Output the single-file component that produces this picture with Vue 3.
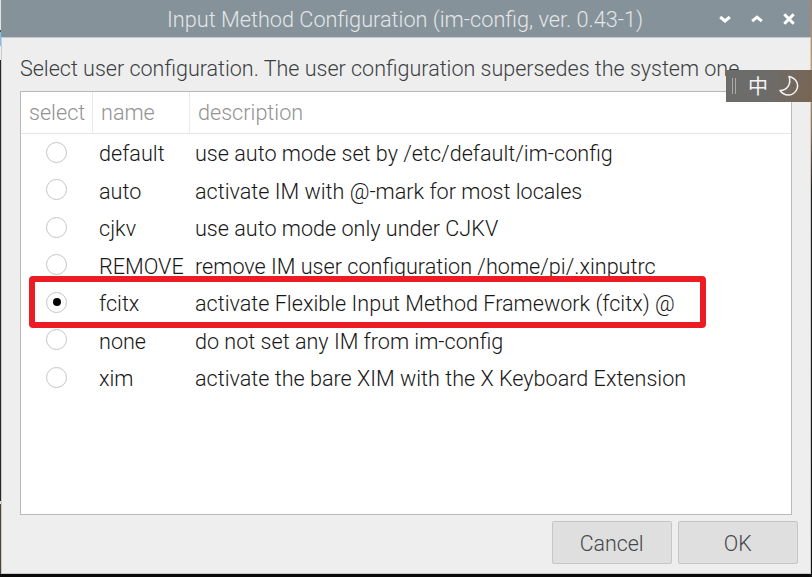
<script setup>
import { ref } from 'vue'

const selected = ref('fcitx')
const rows = [
  { name: 'default', description: 'use auto mode set by /etc/default/im-config' },
  { name: 'auto', description: 'activate IM with @-mark for most locales' },
  { name: 'cjkv', description: 'use auto mode only under CJKV' },
  { name: 'REMOVE', description: 'remove IM user configuration /home/pi/.xinputrc' },
  { name: 'fcitx', description: 'activate Flexible Input Method Framework (fcitx) @' },
  { name: 'none', description: 'do not set any IM from im-config' },
  { name: 'xim', description: 'activate the bare XIM with the X Keyboard Extension' },
]
</script>

<template>
  <div class="desktop">
    <section class="window">
      <header class="titlebar">
        <h1><span class="narrow">Input Method Configuration (im-config, ver. 0.43-1)</span></h1>
        <div class="controls">
          <svg viewBox="0 0 14 14"><path d="M2.2 5 7 9 11.8 5" /></svg>
          <svg viewBox="0 0 14 14"><path d="M2.2 9.2 7 5.2 11.8 9.2" /></svg>
          <svg viewBox="0 0 14 14"><path d="M2.3 2.3 11.7 11.7M11.7 2.3 2.3 11.7" /></svg>
        </div>
      </header>
      <main>
        <p class="prompt"><span class="narrow">Select user configuration. The user configuration supersedes the system one.</span></p>
        <div class="list">
          <div class="head">
            <div><span class="narrow">select</span></div>
            <div><span class="narrow">name</span></div>
            <div><span class="narrow">description</span></div>
          </div>
          <div v-for="row in rows" :key="row.name" class="row" @click="selected = row.name">
            <i class="radio" :class="{ on: selected === row.name }"></i>
            <div><span class="narrow">{{ row.name }}</span></div>
            <div><span class="narrow">{{ row.description }}</span></div>
          </div>
        </div>
        <footer>
          <button><span class="narrow">Cancel</span></button>
          <button><span class="narrow">OK</span></button>
        </footer>
      </main>
    </section>
    <div class="highlight"></div>
    <div class="ime">
      <i class="grip"></i>
      <span>中</span>
      <svg viewBox="0 0 22 22"><path d="M11 1.5C18 3 21.5 9 18.5 15C15.5 21 6.5 22 2 15.5C9.5 15.5 13.5 8.5 11 1.5Z" /></svg>
    </div>
  </div>
</template>

<style>
body { margin: 0; overflow: hidden; }
</style>

<style scoped>
* { box-sizing: border-box; }
.desktop {
  position: relative;
  width: 812px;
  height: 577px;
  padding: 0 1px 3px;
  background:
    linear-gradient(#e2e2e2 0 30px, #555 30px 32px, #78c3ef 32px 46px, #e9eff1 46px 60px, #272528 60px 501px, #ddd 501px 504px, #504238 504px 574px, #090909 574px) 0 0 / 2px 100% no-repeat,
    linear-gradient(#b18153 0, #c9985e 70px, #967049 130px, #24201e 190px, #111 100%) 100% 0 / 3px 100% no-repeat,
    #090909;
  font-family: Roboto, "Noto Sans CJK SC", sans-serif;
  font-size: 22.5px;
  font-weight: 330;
  color: #171717;
  white-space: nowrap;
}
.narrow { display: inline-block; transform: scaleX(.96); transform-origin: 0 50%; }
.window {
  display: flex;
  flex-direction: column;
  height: 574px;
  border: solid #c9caca;
  border-width: 0 1px 1px;
  background: #eee;
}
.titlebar {
  display: flex;
  align-items: center;
  height: 38px;
  padding: 0 15px 0 166px;
  margin: 0 -1px;
  border-bottom: 1px solid #c4c9cb;
  background: #859299;
}
h1 {
  flex: 1;
  margin: 0;
  font-size: 22.5px;
  font-weight: 300;
  line-height: 36px;
  color: #e3e6e8;
}
h1 .narrow { transform: scaleX(.964); }
.controls { display: flex; gap: 18px; }
.controls svg { width: 14px; height: 14px; fill: none; stroke: #fff; stroke-width: 3; }
main { display: flex; flex: 1; flex-direction: column; padding: 12px 18px 0; }
.prompt {
  height: 41px;
  margin: 0;
  line-height: 37px;
  color: #3b3f42;
}
.prompt .narrow { transform: scaleX(.956); }
.list {
  height: 424px;
  border: 1px solid #b9b9b5;
  background: #fff;
}
.head {
  display: grid;
  grid-template-columns: 71px 97px 1fr;
  height: 42px;
  margin-bottom: 1px;
  border-bottom: 1px solid #e7e7e7;
  line-height: 40px;
  color: #929292;
}
.head div { padding-left: 8px; }
.head div + div { border-left: 1px solid #eaeaea; }
.row {
  display: grid;
  grid-template-columns: 78px 96px 1fr;
  align-items: center;
  height: 37.5px;
  line-height: 37.5px;
}
.radio {
  display: grid;
  place-items: center;
  width: 21px;
  height: 21px;
  margin: -3px 0 0 25px;
  border: 1.5px solid #c5c5c5;
  border-radius: 50%;
}
.radio.on::after { content: ""; width: 8px; height: 8px; border-radius: 50%; background: #050505; }
footer { display: flex; justify-content: flex-end; gap: 6px; margin-right: -6px; padding-top: 6px; }
button {
  width: 120px;
  height: 43px;
  padding: 0;
  border: 1px solid #c6c6c6;
  border-radius: 2px;
  background: #dfdfdf;
  font: inherit;
  color: #44484a;
}
button .narrow { transform: scaleX(.95); transform-origin: 50% 50%; }
.highlight {
  position: absolute;
  left: 29px;
  top: 276px;
  width: 677px;
  height: 52px;
  border: 6px solid #ed1c24;
  border-radius: 4px;
}
.ime {
  position: absolute;
  left: 726px;
  top: 70px;
  display: flex;
  align-items: center;
  width: 86px;
  height: 32px;
  padding-left: 6px;
  background: linear-gradient(100deg, #6c6c6b 45%, #786552);
  color: #f4f4f4;
}
.grip { width: 4px; height: 16px; border: solid #aaa; border-width: 0 1px; }
.ime span { width: 20px; margin: 2px 0 0 12px; font-size: 20px; font-weight: 400; line-height: 32px; }
.ime svg { width: 22px; height: 22px; margin-left: 10px; fill: none; stroke: #f4f4f4; stroke-width: 1.5; stroke-linejoin: round; }
</style>
